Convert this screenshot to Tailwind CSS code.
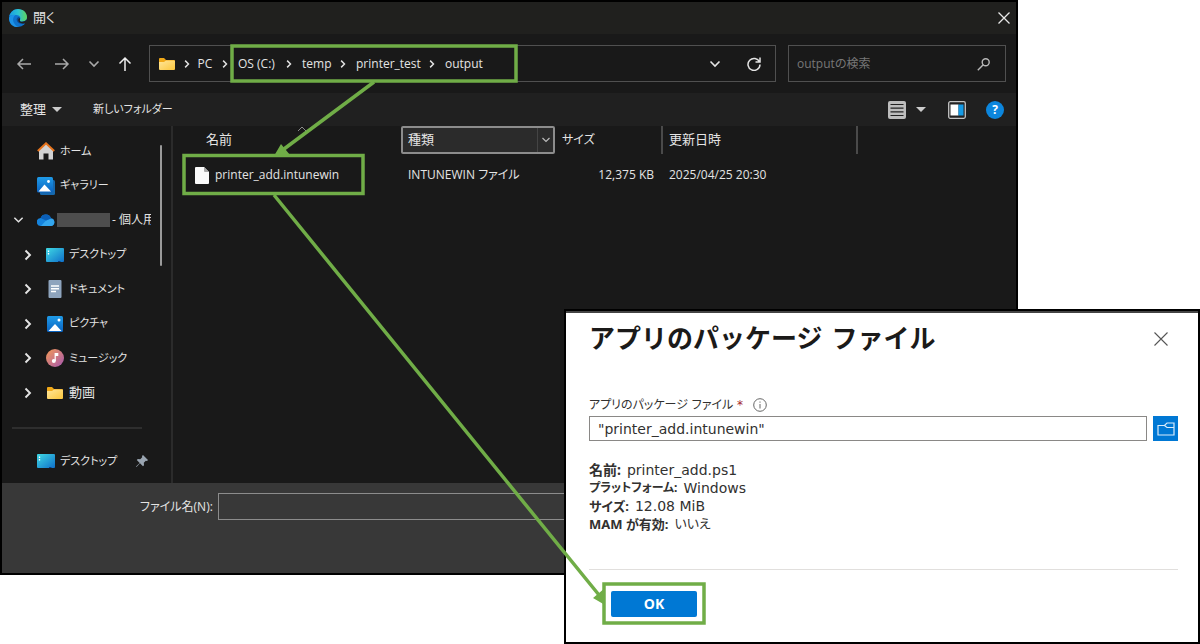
<!DOCTYPE html>
<html lang="ja">
<head>
<meta charset="utf-8">
<meta name="viewport" content="width=device-width, initial-scale=1">
<title>アプリのパッケージ ファイル</title>
<script src="https://cdn.jsdelivr.net/npm/@tailwindcss/browser@4"></script>
</head>
<body class="relative min-h-screen overflow-hidden bg-white font-['Open_Sans','Noto_Sans_CJK_JP',sans-serif] text-xs text-[#e4e4e4] [font-feature-settings:'palt']">

<svg class="absolute size-0" aria-hidden="true">
  <defs>
    <linearGradient id="desk" x1="0" y1="0" x2="1" y2="1"><stop stop-color="#3fd9e4"/><stop offset="1" stop-color="#0f6fc9"/></linearGradient>
    <linearGradient id="pic" x1="0" y1="0" x2="0" y2="1"><stop stop-color="#1f9be8"/><stop offset="1" stop-color="#0a62c0"/></linearGradient>
    <linearGradient id="fold" x1="0" y1="0" x2="1" y2="1"><stop stop-color="#ffe69a"/><stop offset="1" stop-color="#fbc63c"/></linearGradient>
    <linearGradient id="music" x1="0" y1="0" x2="1" y2="1"><stop stop-color="#f59a55"/><stop offset="1" stop-color="#a457b0"/></linearGradient>
    <linearGradient id="edgeTop" x1="0" y1="0" x2="1" y2="0"><stop stop-color="#1a9de0"/><stop offset=".5" stop-color="#2bc3d2"/><stop offset="1" stop-color="#5fd65a"/></linearGradient>
    <symbol id="i-folder" viewBox="0 0 18 16"><path d="M1 3a1 1 0 0 1 1-1h4l2 2h8a1 1 0 0 1 1 1v3H1z" fill="#f0a818"/><path d="M1 6h5l2-1.500h8a1 1 0 0 1 1 1V13a1 1 0 0 1-1 1H2a1 1 0 0 1-1-1z" fill="url(#fold)"/></symbol>
    <symbol id="i-desktop" viewBox="0 0 18 16"><rect x="0" y="1" width="18" height="14" rx="1" fill="url(#desk)"/><path d="M2.500 3.500v1.500M2.500 6v1.500" stroke="#fff" stroke-width="1.300"/><path d="M12 14.500h2.500" stroke="#0b3f86"/></symbol>
    <symbol id="i-picture" viewBox="0 0 18 18"><rect x="1" y="1" width="16" height="16" rx="1.500" fill="url(#pic)"/><path d="M2.500 16 9 9l6.500 7z" fill="#fff"/><circle cx="13" cy="5" r="1.500" fill="#fff"/></symbol>
    <symbol id="chev-r" viewBox="0 0 8 12"><path d="m1.500 1.500 4.500 4.500-4.500 4.500" fill="none" stroke="currentColor" stroke-width="1.900"/></symbol>
    <symbol id="chev-d" viewBox="0 0 12 8"><path d="m1.500 1.500 4.500 4.500 4.500-4.500" fill="none" stroke="currentColor" stroke-width="1.600"/></symbol>
  </defs>
</svg>

<!-- File picker window -->
<section class="absolute left-0 top-0 flex h-[575px] w-[1018px] flex-col border-2 border-black bg-[#191919]" aria-label="開く">
  <header class="flex h-8 shrink-0 items-center bg-[#20201e] pl-[7px] pr-0.5">
    <svg class="mr-1.5 size-[18px]" viewBox="0 0 18 18">
      <circle cx="9" cy="9" r="9" fill="#0e72cc"/>
      <path d="M.4 7C1.500 2.800 5 0 9 0c5 0 9 3.600 9 8 0 3-2.200 4.700-4.800 4.700-2 0-3-.8-2.300-1.800 1.200-2 .1-5-3.700-5C4.500 5.900 2 6 .4 7z" fill="url(#edgeTop)"/>
      <path d="M7 18C3 17.500 0 14 0 9c1-3 4-3.800 6.500-3.100C4 7.500 3.400 11 5 14c1 2 2.500 3.200 4.500 4z" fill="#1c92e6"/>
      <path d="M10.900 10.900c-.6 1 .4 1.800 2.300 1.800 1.500 0 2.700-.5 3.700-1.400-.5 1.300-1.300 2.300-2.300 3.100-3 1-6.600-.4-7-3.700 0-1.400.9-2.600 2.300-2.800.9.700 1.600 1.800 1 3z" fill="#0a4a94"/>
      <path d="M10.900 10.900c-.6 1 .4 1.800 2.300 1.800 2 0 3.700-.9 4.500-2.500l.3 1.800-1.500 2.500c-2 .2-5.500.2-7-2.200-.4-1.300-.2-2.500.9-3.300.4.600.8 1.200.5 1.900z" fill="#20201e"/>
    </svg>
    <h1 class="text-[13px]">開く</h1>
    <button class="ml-auto p-1" aria-label="閉じる"><svg class="size-3" viewBox="0 0 12 12"><path d="m.5.5 11 11m0-11-11 11" stroke="#e8e8e8" stroke-width="1.300"/></svg></button>
  </header>

  <nav class="flex h-[59px] shrink-0 items-center pl-3.5 pr-2.5" aria-label="ナビゲーション">
    <button class="w-[38px]" aria-label="戻る"><svg class="h-3 w-4" viewBox="0 0 16 12" fill="none" stroke="#a9a9a9" stroke-width="1.500"><path d="M15 6H2m5-5L2 6l5 5"/></svg></button>
    <button class="w-[34px]" aria-label="進む"><svg class="h-3 w-4" viewBox="0 0 16 12" fill="none" stroke="#a9a9a9" stroke-width="1.500"><path d="M1 6h13M9 1l5 5-5 5"/></svg></button>
    <button class="w-[30px] text-[#a9a9a9]" aria-label="最近表示した場所"><svg class="h-2 w-3"><use href="#chev-d"/></svg></button>
    <button class="w-[31px]" aria-label="上へ"><svg class="h-4 w-3.5" viewBox="0 0 14 16" fill="none" stroke="#efefef" stroke-width="1.500"><path d="M7 15V2M1.500 7.500 7 2l5.500 5.500"/></svg></button>
    <div class="flex h-[37px] grow items-center border border-[#505050] pl-2">
      <svg class="mr-2 h-4 w-[18px]"><use href="#i-folder"/></svg>
      <svg class="h-2.5 w-1.5"><use href="#chev-r"/></svg>
      <button class="w-6 pl-1.5 text-center">PC</button>
      <svg class="ml-2 h-2.5 w-1.5"><use href="#chev-r"/></svg>
      <button class="ml-2.5 w-12 whitespace-nowrap text-left">OS (C:)</button>
      <svg class="h-2.5 w-1.5"><use href="#chev-r"/></svg>
      <button class="ml-2.5 w-[38px] text-left">temp</button>
      <svg class="h-2.5 w-1.5"><use href="#chev-r"/></svg>
      <button class="ml-2.5 w-[73px] text-left">printer_test</button>
      <svg class="h-2.5 w-1.5"><use href="#chev-r"/></svg>
      <button class="ml-2.5 text-left">output</button>
      <button class="ml-auto" aria-label="以前の場所"><svg class="h-2 w-3"><use href="#chev-d"/></svg></button>
      <button class="ml-[26px] mr-3.5" aria-label="最新の情報に更新"><svg class="size-3.5" viewBox="0 0 14 14" fill="none" stroke="#e4e4e4" stroke-width="1.500"><path d="M12.500 5A6 6 0 1 0 13 7.500M13 .5V5H8.500"/></svg></button>
    </div>
    <label class="ml-3 flex h-[37px] w-[218px] items-center border border-[#505050] pl-2 pr-3.5">
      <input class="min-w-0 grow bg-transparent outline-none placeholder:text-[#777]" type="search" placeholder="outputの検索" aria-label="outputの検索">
      <svg class="size-3.5" viewBox="0 0 14 14" fill="none" stroke="#b8b8b8" stroke-width="1.400"><circle cx="8.700" cy="5.300" r="3.500"/><path d="M6.200 7.800.8 13.300"/></svg>
    </label>
  </nav>

  <div class="flex h-[33px] shrink-0 items-center bg-[#202020] pl-[18px] pr-3">
    <button class="flex w-[73px] items-center gap-1.5 text-[13px]">整理<svg class="h-[5px] w-2.5" viewBox="0 0 10 5"><path d="M0 0h10L5 5z" fill="#ccc"/></svg></button>
    <button class="text-[11px]">新しいフォルダー</button>
    <button class="ml-auto flex items-center gap-2.5" aria-label="表示の変更">
      <svg class="size-[18px]" viewBox="0 0 18 18"><rect width="18" height="18" rx="2" fill="#bdbdbd"/><path d="M2.500 3.500h13M2.500 7.200h13M2.500 10.900h13M2.500 14.500h13" stroke="#222" stroke-width="1.200"/></svg>
      <svg class="h-[5px] w-2.5" viewBox="0 0 10 5"><path d="M0 0h10L5 5z" fill="#ccc"/></svg>
    </button>
    <button class="ml-[22px]" aria-label="プレビュー ウィンドウ"><svg class="size-[18px]" viewBox="0 0 18 18"><rect x=".7" y=".7" width="16.600" height="16.600" rx="1.500" fill="#222" stroke="#c4c4c4" stroke-width="1.300"/><path d="M2.500 3.500h8v11h-8z" fill="#fff"/><path d="M10.500 3.500h5v11h-5z" fill="#159be6"/></svg></button>
    <button class="ml-5 size-[18px] rounded-full bg-[#0c86dd] text-center font-bold leading-[18px] text-white" aria-label="ヘルプ">?</button>
  </div>

  <div class="flex min-h-0 grow">
    <aside class="relative w-[171px] shrink-0 border-r-2 border-[#2b2b2b] pt-2 text-[11px]">
      <ul class="grid h-[276px] w-[149px] auto-rows-fr overflow-hidden whitespace-nowrap">
        <li class="flex items-center pl-[35px]"><svg class="mr-[5px] size-[18px]" viewBox="0 0 18 18"><path d="M2 8 9 1.500 16 8v9.500h-4.500v-6h-5v6H2z" fill="#d2d2d2"/><path d="M.8 9 9 1.300 17.200 9" fill="none" stroke="#e5731c" stroke-width="2"/></svg>ホーム</li>
        <li class="flex items-center pl-[35px]"><svg class="mr-[5px] size-[18px]" viewBox="0 0 18 18"><rect x="3" y="3" width="15" height="15" rx="1.500" fill="#1668ad"/><rect width="16" height="15.500" rx="1.500" fill="url(#pic)"/><path d="m1.500 14.500 6-7 6.500 7z" fill="#fff"/><circle cx="11.500" cy="4.500" r="1.400" fill="#fff"/></svg>ギャラリー</li>
        <li class="flex items-center pl-[11px] text-xs"><svg class="mr-[13px] h-2 w-[11px] shrink-0"><use href="#chev-d"/></svg><svg class="mr-0.5 h-3 w-[18px] shrink-0" viewBox="0 0 18 12"><path d="M4 12a4 4 0 0 1-.4-8A5.500 5.500 0 0 1 14 4.500a3.800 3.800 0 0 1 .3 7.500z" fill="#1583dc"/><path d="M4 12 9 6.500l5-2a3.800 3.800 0 0 1 .3 7.500z" fill="#33a6ee"/><path d="M3.600 4A5.500 5.500 0 0 1 14 4.500L9 6.500z" fill="#0b5fb8"/></svg><span class="mr-0.5 h-3.5 w-[53px] shrink-0 bg-[#4d4d4d]"></span>- 個人用</li>
        <li class="flex items-center pl-[22px]"><svg class="mr-3.5 h-3 w-2"><use href="#chev-r"/></svg><svg class="mr-[5px] h-4 w-[18px]"><use href="#i-desktop"/></svg>デスクトップ</li>
        <li class="flex items-center pl-[22px]"><svg class="mr-3.5 h-3 w-2"><use href="#chev-r"/></svg><svg class="mr-[5px] size-[18px]" viewBox="0 0 18 18"><rect x="2.500" width="13" height="18" rx="1" fill="#8ea4bd"/><path d="M5 6h8M5 8.800h8M5 11.500h5" stroke="#fff" stroke-width="1.400"/></svg>ドキュメント</li>
        <li class="flex items-center pl-[22px]"><svg class="mr-3.5 h-3 w-2"><use href="#chev-r"/></svg><svg class="mr-[5px] size-[18px]"><use href="#i-picture"/></svg>ピクチャ</li>
        <li class="flex items-center pl-[22px]"><svg class="mr-3.5 h-3 w-2"><use href="#chev-r"/></svg><svg class="mr-[5px] size-[18px]" viewBox="0 0 18 18"><circle cx="9" cy="9" r="9" fill="url(#music)"/><circle cx="7.800" cy="12" r="2" fill="#fff"/><path d="M9.200 12V4.500h2.500v2H9.200" fill="#fff" stroke="#fff" stroke-width="1.200"/></svg>ミュージック</li>
        <li class="flex items-center pl-[22px] text-[13px]"><svg class="mr-3.5 h-3 w-2"><use href="#chev-r"/></svg><svg class="mr-[5px] h-4 w-[18px]"><use href="#i-folder"/></svg>動画</li>
      </ul>
      <hr class="ml-2.5 mt-[17px] w-[130px] border-t-2 border-[#2e2e2e]">
      <div class="flex h-16 items-center pl-[35px]"><svg class="mr-[5px] h-4 w-[18px]"><use href="#i-desktop"/></svg><span class="w-[76px]">デスクトップ</span>
        <svg class="size-3" viewBox="0 0 12 12"><path d="M7 0 12 5l-1 1-1.200-.2-2 2 .2 2.400-1 1L4 8.300.5 12 0 11.500 3.700 8 .8 5l1-1 2.400.2 2-2L6 1z" fill="#9aa5b1"/></svg>
      </div>
      <span class="absolute right-[9px] top-[19px] h-[121px] w-0.5 rounded-full bg-[#9a9a9a]"></span>
    </aside>

    <main class="grow">
      <table class="table-fixed border-collapse text-left">
        <colgroup><col class="w-[228px]"><col class="w-[154px]"><col class="w-[107px]"><col class="w-[195px]"></colgroup>
        <thead>
          <tr class="h-7">
            <th class="relative pl-[33px] text-[13px] font-normal">名前<svg class="absolute left-[124px] top-0 h-1.5 w-2.5" viewBox="0 0 10 6"><path d="m1 5 4-4 4 4" fill="none" stroke="#8a8a8a"/></svg></th>
            <th class="p-0 font-normal"><button class="flex h-7 w-full items-center rounded-xs border-2 border-[#8c8c8c] bg-[#2b2b2b] pl-[5px] text-[13px]">種類<span class="ml-auto flex h-full w-4 items-center justify-center border-l border-[#444]"><svg class="h-1.5 w-2" viewBox="0 0 8 6"><path d="m.5 1 3.500 3.500L7.500 1" fill="none" stroke="#bbb" stroke-width="1.200"/></svg></span></button></th>
            <th class="border-r-2 border-[#4a4a4a] pl-[7px] font-normal">サイズ</th>
            <th class="border-r-2 border-[#4a4a4a] pl-1.5 text-[13px] font-normal">更新日時</th>
          </tr>
        </thead>
        <tbody>
          <tr class="h-[42px] whitespace-nowrap">
            <td class="pl-[22px]"><span class="flex items-center"><svg class="mr-1.5 h-[17px] w-3.5" viewBox="0 0 14 17"><path d="M0 1a1 1 0 0 1 1-1h8l5 5v11a1 1 0 0 1-1 1H1a1 1 0 0 1-1-1z" fill="#fafafa"/><path d="M9 0v4a1 1 0 0 0 1 1h4z" fill="#a8a8a8"/></svg>printer_add.intunewin</span></td>
            <td class="pl-[7px]">INTUNEWIN ファイル</td>
            <td class="pr-2 text-right">12,375 KB</td>
            <td class="pl-[7px]">2025/04/25 20:30</td>
          </tr>
        </tbody>
      </table>
    </main>
  </div>

  <footer class="h-[90px] shrink-0 bg-[#383838] pl-[138px] pt-2.5">
    <div class="flex items-center gap-1.5">
      <label for="fname" class="w-[72px] whitespace-nowrap text-right">ファイル名(N):</label>
      <input id="fname" type="text" class="h-[27px] w-[600px] border border-[#8c8c8c] bg-[#383838] px-1">
    </div>
  </footer>
</section>

<!-- Package file panel -->
<section class="absolute left-[564px] top-[309px] flex h-[335px] w-[636px] flex-col border-2 border-black bg-white pl-[23px] pr-5 font-['DejaVu_Sans','Noto_Sans_CJK_JP',sans-serif] text-sm leading-[18px] text-[#323130] shadow-[inset_0_2px_0_#444]" aria-labelledby="pkg">
  <header class="flex h-14 shrink-0 items-center justify-between pr-2.5">
    <h2 id="pkg" class="text-[26px] font-bold text-[#1b1a19] [font-feature-settings:normal]">アプリのパッケージ ファイル</h2>
    <button aria-label="閉じる"><svg class="size-3.5" viewBox="0 0 14 14"><path d="m.5.5 13 13m0-13-13 13" stroke="#555" stroke-width="1.100"/></svg></button>
  </header>
  <div class="mt-[27px] flex h-[22px] shrink-0 items-center text-xs">
    <label for="pkgfile">アプリのパッケージ ファイル <span class="text-[#a4262c]">*</span></label>
    <svg class="ml-2.5 size-3.5" viewBox="0 0 14 14" fill="none" stroke="#666"><circle cx="7" cy="7" r="6.300"/><path d="M7 6v4.500M7 3.500v1.200"/></svg>
  </div>
  <div class="flex shrink-0 gap-1.5">
    <input id="pkgfile" type="text" value="&quot;printer_add.intunewin&quot;" class="h-[25px] min-w-0 grow border border-[#8a8886] bg-white px-2 outline-none">
    <button class="flex size-[25px] items-center justify-center bg-[#0078d4]" aria-label="ファイルの選択"><svg class="h-3.5 w-[18px]" viewBox="0 0 18 14" fill="none" stroke="#d9ecfb" stroke-width="1.200"><path d="M1 3.500h6.500L10 1h7v12H1zM7.500 3.500 10 5.500h7"/></svg></button>
  </div>
  <dl class="mt-5 shrink-0">
    <div class="flex gap-1.5"><dt class="font-['Noto_Sans','Noto_Sans_CJK_JP',sans-serif] font-bold">名前:</dt><dd>printer_add.ps1</dd></div>
    <div class="flex gap-1.5"><dt class="font-['Noto_Sans','Noto_Sans_CJK_JP',sans-serif] text-xs leading-[18px] font-bold">プラットフォーム:</dt><dd>Windows</dd></div>
    <div class="flex gap-1.5"><dt class="font-['Noto_Sans','Noto_Sans_CJK_JP',sans-serif] text-[13px] font-bold">サイズ:</dt><dd>12.08 MiB</dd></div>
    <div class="flex gap-1.5"><dt class="font-['Noto_Sans','Noto_Sans_CJK_JP',sans-serif] text-[13px] font-bold">MAM が有効:</dt><dd class="text-[13px]">いいえ</dd></div>
  </dl>
  <footer class="mt-9 border-t border-[#e1dfdd] pl-[22px] pt-[21px]">
    <button class="h-[26px] w-[86px] rounded-xs bg-[#0078d4] font-['Open_Sans',sans-serif] text-sm font-bold text-white">OK</button>
  </footer>
</section>

<!-- Callouts that link the folder, the file and the OK button -->
<svg class="pointer-events-none absolute left-0 top-0 h-[644px] w-[1200px]" viewBox="0 0 1200 644" fill="none" stroke="#70ad47" stroke-width="3.500" aria-hidden="true">
  <rect x="232" y="46" width="284" height="35"/>
  <rect x="184" y="155.500" width="179" height="38"/>
  <rect x="604" y="584" width="100" height="39"/>
  <path d="M374 82 284 149M274 195 599 595"/>
  <path d="m274 156 7-12 9 11zM605 605l-12-7 12-10z" fill="#70ad47" stroke="none"/>
</svg>
</body>
</html>
